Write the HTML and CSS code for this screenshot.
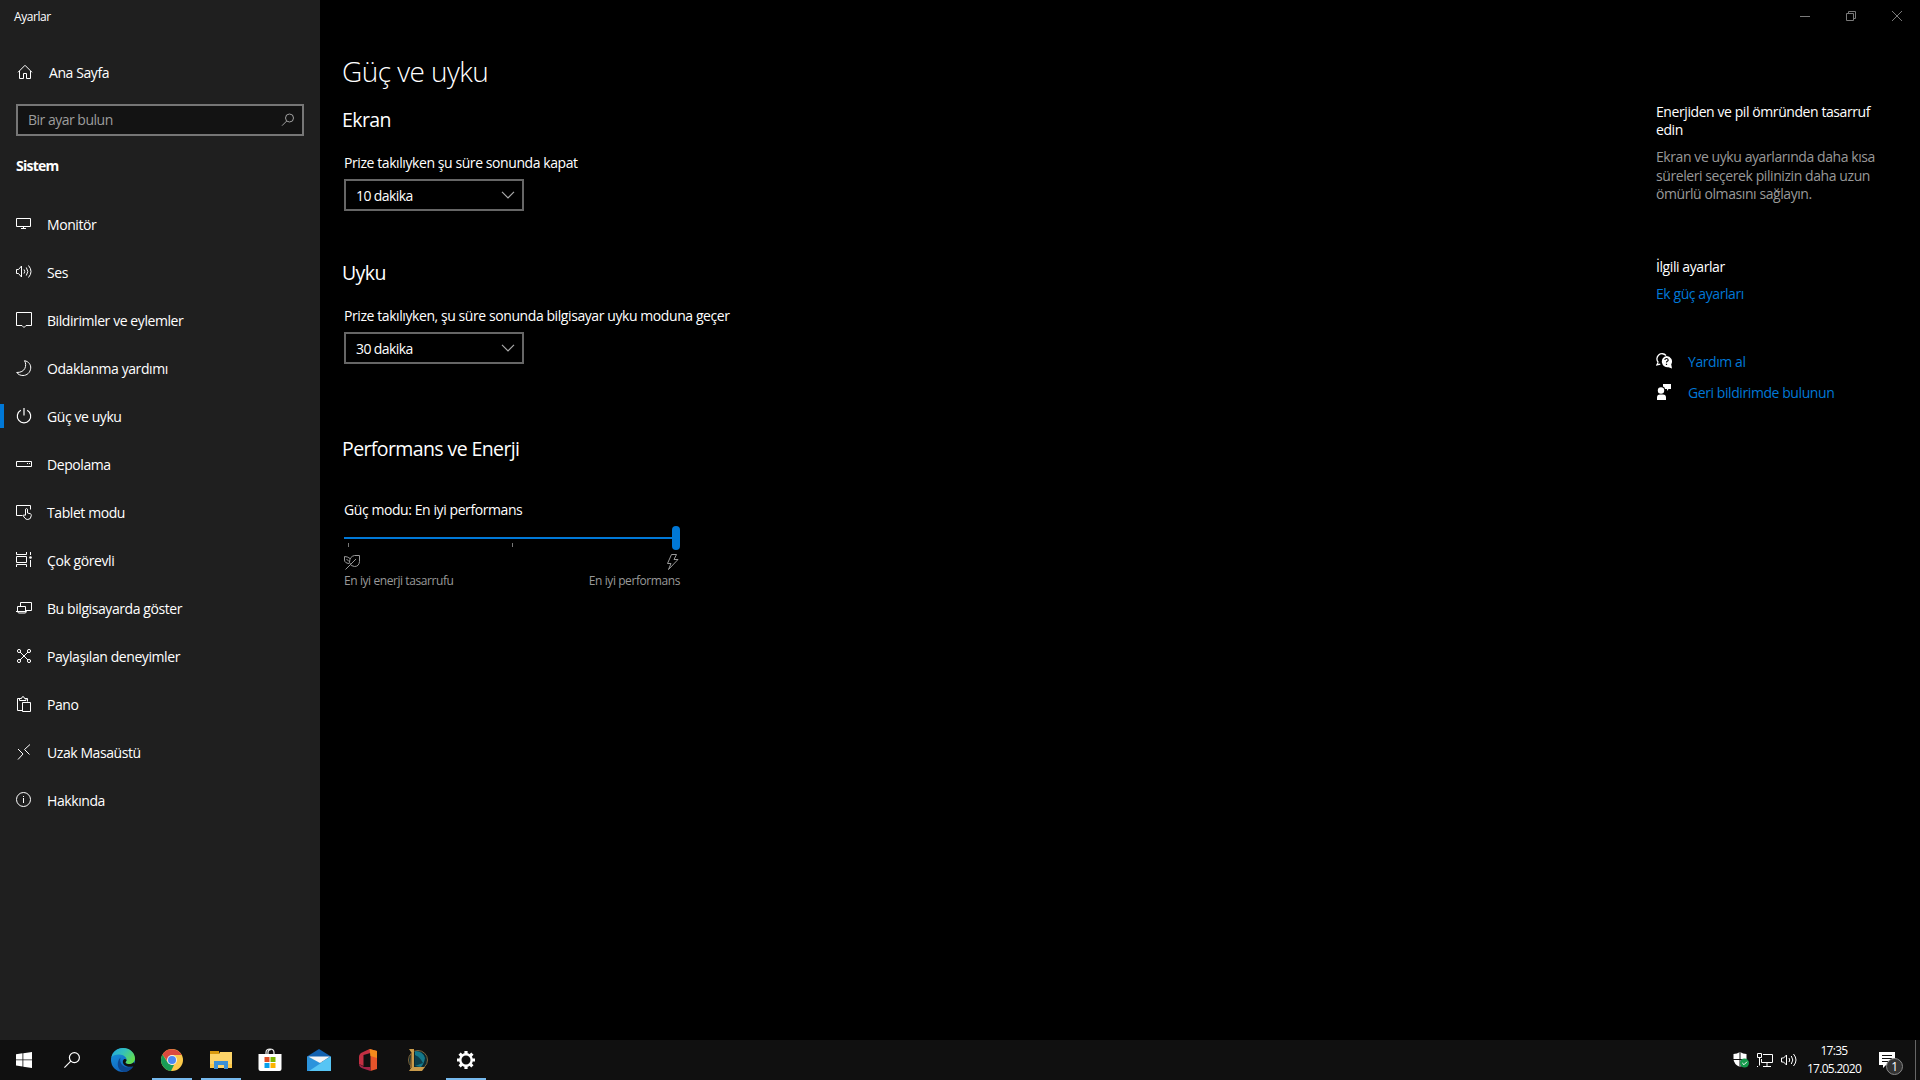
FILE: index.html
```html
<!DOCTYPE html>
<html lang="tr">
<head>
<meta charset="utf-8">
<title>Ayarlar</title>
<link rel="stylesheet" href="styles.css">
</head>
<body>
<div class="desktop">
  <div class="window">
    <aside class="sidebar">
      <div class="app-title"><span>Ayarlar</span></div>
      <a class="home">
        <svg class="icon" viewBox="0 0 16 16"><path d="M1 8.3 8 1.3l7 7M2.5 7v7.5h4V9.500h3v5h4V7"/></svg>
        <span>Ana Sayfa</span>
      </a>
      <div class="search">
        <span>Bir ayar bulun</span>
        <svg class="icon" viewBox="0 0 16 16"><circle cx="9.500" cy="6" r="4"/><path d="M6.700 9 2 13.700"/></svg>
      </div>
      <h2 class="group"><span>Sistem</span></h2>
      <nav class="nav">
        <a class="item"><svg class="icon" viewBox="0 0 16 16"><path d="M.5 2.500h14v8H.5zM7.500 10.500v2M5 12.500h5"/></svg><span>Monitör</span></a>
        <a class="item"><svg class="icon" viewBox="0 0 16 16"><path d="M.5 5.500h2L5.500 2v11L2.500 9.500h-2zM8 5.500q1.500 2 0 4M10.300 3.500q3 4 0 8M12.500 1.500q5 6 0 12"/></svg><span>Ses</span></a>
        <a class="item"><svg class="icon" viewBox="0 0 16 16"><path d="M.5.5h15v13H10l-2 2-2-2H.5z"/></svg><span>Bildirimler ve eylemler</span></a>
        <a class="item"><svg class="icon" viewBox="0 0 16 16"><path d="M8.500.7C13 1.500 15 5 14.700 8.200 14.300 12.500 11 15.500 7 15.500c-2.500 0-4.800-1-6.300-3C5 12.500 7.500 11 8.800 8.500 10 6 10 3 8.500.7z"/></svg><span>Odaklanma yardımı</span></a>
        <a class="item active"><svg class="icon" viewBox="0 0 16 16"><path d="M8 0v7.500M4.800 2.300a6.700 6.700 0 1 0 6.400 0" stroke-width="1.200"/></svg><span>Güç ve uyku</span></a>
        <a class="item"><svg class="icon" viewBox="0 0 16 16"><path d="M.5 5.500h15v5H.5zM11 7.500h1M13 7.500h1"/></svg><span>Depolama</span></a>
        <a class="item"><svg class="icon" viewBox="0 0 16 16"><path d="M6.500 11.500h-6v-10h14v4M9.500 11V5.200q1-1.300 2 0V9l3 .8q1 .4.8 1.700-.3 4-3.500 4-2 0-3-1.500L7 11.500q.8-1.200 2.500 0"/></svg><span>Tablet modu</span></a>
        <a class="item"><svg class="icon" viewBox="0 0 16 16"><path d="M.5 0v2.500h10V0M.5 4.500h10v6H.5zM.5 15v-2.500h10V15M14.500 0v3M14.500 8v7"/><circle cx="14.500" cy="5.500" r="1.300" fill="#fff" stroke="none"/></svg><span>Çok görevli</span></a>
        <a class="item"><svg class="icon" viewBox="0 0 16 16"><path d="M4.500 6V2.500h11v8H10M1.500 11V6.500h8V11M0 11.500h1.500l1 1.500h7l1-1.500H0z"/></svg><span>Bu bilgisayarda göster</span></a>
        <a class="item"><svg class="icon" viewBox="0 0 16 16"><path d="M4 4l8 8M12 4l-8 8"/><g><circle cx="3" cy="3" r="1.600"/><circle cx="13" cy="3" r="1.600"/><circle cx="3" cy="13" r="1.600"/><circle cx="13" cy="13" r="1.600"/></g></svg><span>Paylaşılan deneyimler</span></a>
        <a class="item"><svg class="icon" viewBox="0 0 16 16"><path d="M6 14.500H1.500v-12H4M9 2.500h2.500v3M3.500 4.500V2.500H5.500Q6 .5 7 .5T8.500 2.500h1.500v2zM6.500 6.500h8v9h-8z"/></svg><span>Pano</span></a>
        <a class="item"><svg class="icon" viewBox="0 0 16 16"><path d="M2 5l5 5-5 5.500M14 .5 8.500 5.500l5 5"/></svg><span>Uzak Masaüstü</span></a>
        <a class="item"><svg class="icon" viewBox="0 0 16 16"><circle cx="7.500" cy="7.500" r="7"/><path d="M7.500 6v5M7.500 4v1"/></svg><span>Hakkında</span></a>
      </nav>
    </aside>
    <main class="content">
      <div class="caption">
        <svg class="capicon" viewBox="0 0 10 10"><path d="M0 5.500h10"/></svg>
        <svg class="capicon" viewBox="0 0 10 10"><path d="M.5 2.500h7v7h-7zM2.500 2V.5h7v7H8"/></svg>
        <svg class="capicon" viewBox="0 0 10 10"><path d="M0 0l10 10M10 0 0 10"/></svg>
      </div>
      <div class="columns">
        <section class="settings">
          <h1><span>Güç ve uyku</span></h1>
          <h3><span>Ekran</span></h3>
          <p class="label"><span>Prize takılıyken şu süre sonunda kapat</span></p>
          <div class="combo"><span>10 dakika</span><svg class="chev" viewBox="0 0 14 8"><path d="M1 .8l6 6 6-6"/></svg></div>
          <h3 class="sleep"><span>Uyku</span></h3>
          <p class="label"><span>Prize takılıyken, şu süre sonunda bilgisayar uyku moduna geçer</span></p>
          <div class="combo"><span>30 dakika</span><svg class="chev" viewBox="0 0 14 8"><path d="M1 .8l6 6 6-6"/></svg></div>
          <h3 class="perf"><span>Performans ve Enerji</span></h3>
          <p class="label mode"><span>Güç modu: En iyi performans</span></p>
          <div class="slider"><i class="track"></i><i class="thumb"></i></div>
          <div class="ticks"><i></i><i></i></div>
          <div class="ends">
            <svg class="endicon" viewBox="0 0 16 16"><path d="M15.500 1.500v6q-.5 5-5 5-4 0-5-4 0-6 5-7zM12 5 1.500 15.500M5 9.500Q.5 9 .5 6V2.500Q3.500 2.500 6 4.500M2.500 5l2.500 2.500"/></svg>
            <svg class="endicon bolt" viewBox="0 0 16 16"><path d="M8.500.5h5L11 5.500h4L5.500 15.500 8 9.500H4.500z"/></svg>
          </div>
          <div class="ends small"><span>En iyi enerji tasarrufu</span><span>En iyi performans</span></div>
        </section>
        <aside class="related">
          <h4><span>Enerjiden ve pil ömründen tasarruf<br>edin</span></h4>
          <p class="hint"><span>Ekran ve uyku ayarlarında daha kısa<br>süreleri seçerek pilinizin daha uzun<br>ömürlü olmasını sağlayın.</span></p>
          <h4 class="more"><span>İlgili ayarlar</span></h4>
          <a class="link"><span>Ek güç ayarları</span></a>
          <div class="help">
            <svg class="icon" viewBox="0 0 16 16"><path d="M2.200 9.300A5 5 0 1 1 10 2.500M2.200 9.300.8 12l3.500-.8" stroke-width="1.300"/><path d="M10.500 3a5.500 5.500 0 0 1 4.700 8.300L16 15.500l-3.500-1.300A5.500 5.500 0 1 1 10.500 3z" fill="#fff" stroke="none"/><path d="M8.800 7q.2-1.500 1.700-1.500T12.200 7q0 .8-.9 1.300t-.8 1.200M10.500 10.800V12" stroke="#000" stroke-width="1.200"/></svg>
            <a class="link"><span>Yardım al</span></a>
          </div>
          <div class="help">
            <svg class="icon" viewBox="0 0 16 16"><g fill="#fff" stroke="none"><circle cx="5" cy="6.500" r="3.200"/><path d="M1 16v-2.500Q1 10.500 4 10.500h3q3 0 3 3V16zM7 0h8v5h-2.500L11 7V5H9Q9 3 7 2.500z"/></g></svg>
            <a class="link"><span>Geri bildirimde bulunun</span></a>
          </div>
        </aside>
      </div>
    </main>
  </div>
  <footer class="taskbar">
    <div class="apps">
      <a class="app system"><svg width="16" height="16" viewBox="0 0 16 16"><path fill="#fff" d="M0 2.200 6.500 1.300v6.200H0zM7.300 1.200 16 0v7.500H7.300zM0 8.300h6.500v6.200L0 13.600zM7.300 8.300H16V16l-8.700-1.200z"/></svg></a>
      <a class="app system"><svg width="16" height="16" viewBox="0 0 16 16" fill="none" stroke="#fff" stroke-width="1.200"><circle cx="10.400" cy="5.600" r="5"/><path d="M6.800 9.200.4 15.600"/></svg></a>
      <a class="app pinned"><svg width="24" height="24" viewBox="0 0 24 24">
        <defs><linearGradient id="eg1" x1="0" y1="0" x2="1" y2=".6"><stop offset="0" stop-color="#1fa5e5"/><stop offset=".5" stop-color="#35c1b8"/><stop offset="1" stop-color="#62dd4e"/></linearGradient><linearGradient id="eg2" x1="0" y1="0" x2=".6" y2="1"><stop offset="0" stop-color="#1795dc"/><stop offset="1" stop-color="#1062bd"/></linearGradient></defs>
        <circle cx="12" cy="12" r="12" fill="url(#eg2)"/>
        <path fill="url(#eg1)" d="M.4 9.500C1.500 4 6 0 12 0c7 0 12 5 12 10.500 0 3.500-2.500 5.500-5.500 5.500-2.500 0-4.200-.8-4-1.600 0-.5 1-1 1-2.700C15.500 9 12.500 7 8.500 6.600 5 6.300 1.500 7.500.4 9.500z"/>
        <path fill="#0d478f" d="M9.500 9.500c-1.500 5 2 9 6 9.700 2.800.5 5-.5 6.700-1.200Q18.500 24 12.500 24 7 22 6.800 17T9.500 9.500z"/>
        <path fill="#101010" d="M24 16.500l-1.300 2c-.8-.5-3.500 1-7.200-.3-4-1.500-4.500-5.500-2.500-7 1.200-.8 3 0 2.500 1.500-.8 1.300-1.200 1.600-.8 2.300 1 1.200 5.300 1.800 8.300-.8z"/></svg></a>
      <a class="app open"><svg width="22" height="22" viewBox="0 0 22 22"><circle cx="11" cy="11" r="11" fill="#fbc94a"/><path fill="#db4a3f" d="M1.500 5.500A11 11 0 0 1 20.600 6H11L7 13z"/><path fill="#189c56" d="M1.500 5.500 6.700 13.500 11 16l2 0-3 6A11 11 0 0 1 1.500 5.500z"/><circle cx="11" cy="11" r="5" fill="#f1f1f1"/><circle cx="11" cy="11" r="4" fill="#4b88f1"/></svg></a>
      <a class="app open"><svg width="22" height="18" viewBox="0 0 22 18"><path fill="#d99a0f" d="M0 0h9v3H0z"/><path fill="#fdd468" d="M0 3h9l1-2h12v16H0z"/><path fill="#3c91d6" d="M4 10h14v8h-4v-4H8v4H4z"/><path fill="#fbc747" d="M0 13h4v4H0zM18 13h4v4h-4z"/></svg></a>
      <a class="app"><svg width="24" height="24" viewBox="0 0 24 24"><path d="M8 6V4.500q0-3.500 4-3.500t4 3.500V6M10 6V4q0-2 3-2.500" fill="none" stroke="#eee" stroke-width="1.200"/><path fill="#fff" d="M.5 6h23v15q0 2-2 2h-19q-2 0-2-2z"/><path fill="#e04e25" d="M6.500 9h5v5h-5z"/><path fill="#7db700" d="M12.500 9h5v5h-5z"/><path fill="#07a0ec" d="M6.500 15h5v5h-5z"/><path fill="#fcb400" d="M12.500 15h5v5h-5z"/></svg></a>
      <a class="app"><svg width="24" height="22" viewBox="0 0 24 22"><path fill="#1161b0" d="M0 7.500 12 0l12 7.500V12H0z"/><path fill="#30a8e8" d="M0 7.500 14 14l10-6.500V22H0z"/><path fill="#57c5f4" d="M24 7.500 0 21.500V22h24z"/><path fill="#2b93dc" d="M0 7.500 14 14 2 22H0z"/><path fill="#f3f5f7" d="M1 7.500h22L13 14z"/></svg></a>
      <a class="app"><svg width="20" height="24" viewBox="0 0 20 24"><path fill="#c22f42" d="M11.500 1 4 4.500Q1 6 1 9v7l4.500 2V7l7-2z"/><path fill="#e6542a" d="M11.500 1 19 3v18l-6.500 2V5z"/><path fill="#f28a1c" d="M11.500 1 19 3v7l-6.500-2z"/><path fill="#a22347" d="M1 16l5 3h6.500v4L5 20.500Q1 19 1 16z"/></svg></a>
      <a class="app"><svg width="22" height="24" viewBox="0 0 22 24"><circle cx="12" cy="12" r="9.500" fill="#0a2930" stroke="#80653a"/><path fill="#14788a" d="M9 3q8 0 10 7-1 6-4 9L9 18z"/><path fill="#0b3d4a" d="M9 7q5 2 8 8l-8 3z"/><path fill="#c99b4b" d="M3 1h5v18h11l-3 4H3l2-3V4z"/><path fill="#8a642c" d="M5 4h1v16H4z"/></svg></a>
      <a class="app open"><svg width="20" height="20" viewBox="0 0 20 20"><g fill="none" stroke="#fff"><circle cx="10" cy="10" r="5.700" stroke-width="2.400"/><path stroke-width="3.200" d="M10 1v3M10 16v3M1 10h3M16 10h3M3.600 3.600l2.200 2.200M14.200 14.200l2.200 2.200M16.400 3.600l-2.200 2.200M5.800 14.200l-2.200 2.200"/></g></svg></a>
    </div>
    <div class="tray">
      <svg width="16" height="16" viewBox="0 0 16 16"><path fill="#fff" d="M7 0Q10 2 13.500 2v5q0 5-6.500 8Q.5 12 .5 7V2Q4 2 7 0z"/><path stroke="#101010" d="M7 0v15M0 7.500h14"/><circle cx="11.500" cy="11" r="4.500" fill="#159a4c"/><path d="M9.300 11l1.700 1.700 3-3" fill="none" stroke="#fff"/></svg>
      <svg width="16" height="14" viewBox="0 0 16 14"><path fill="none" stroke="#fff" d="M6 1.500h9.500v8h-11V6M.5.5h4v4h-4zM2.500 4.500v8M0 13.500h1M10 9.500v4M6 13.500h8"/></svg>
      <svg width="16" height="14" viewBox="0 0 16 14"><path fill="none" stroke="#fff" d="M.5 5h2L5.500 2v10L2.500 9h-2zM8 5q1.500 2 0 4M10.300 3q3 4 0 8M12.500 1q5 6 0 12"/></svg>
      <div class="clock"><span>17:35</span><span>17.05.2020</span></div>
      <div class="action">
        <svg width="17" height="16" viewBox="0 0 17 16"><path fill="#fff" d="M0 0h16v13H7l-3 3v-3H0z"/><path stroke="#101010" d="M3 3.500h10M3 6.500h10M3 9.500h6"/></svg>
        <b class="badge">1</b>
      </div>
    </div>
  </footer>
</div>
</body>
</html>
```
FILE: styles.css
```css
* { box-sizing: border-box; }
html, body { margin: 0; height: 100%; background: #000; }
body { font: 14px/20px "Open Sans", "Noto Sans", sans-serif; color: #fff; overflow: hidden; letter-spacing: -0.42px; }
h1, h2, h3, h4, p { margin: 0; font-weight: 400; }
svg { display: block; flex: none; }
.desktop { display: flex; flex-direction: column; width: 1920px; height: 1080px; }
.window { display: flex; height: 1040px; }

.sidebar { width: 320px; background: #1f1f1f; }
.app-title { height: 32px; padding: 1px 0 0 14px; font-size: 12px; line-height: 32px; }
.icon { width: 16px; height: 16px; fill: none; stroke: #fff; stroke-width: 1; }
.home { display: flex; align-items: center; gap: 16px; height: 48px; margin-top: 17px; padding: 0 17px; }
.home .icon { margin-top: -2px; }
.search { display: flex; align-items: center; justify-content: space-between; height: 32px; margin: 7px 16px 0; padding: 0 6px 0 10px; border: 2px solid #767676; background: #131313; color: #9d9d9d; letter-spacing: -0.5px; }
.search span { padding-bottom: 1px; }
.search .icon { stroke: #a0a0a0; }
.group { margin-top: 20px; padding-left: 16px; font-size: 14px; font-weight: 700; letter-spacing: -0.75px; }
.nav { margin-top: 24px; }
.item { display: flex; align-items: center; gap: 15px; height: 48px; padding-left: 16px; }
.item span { padding-top: 2px; }
.active { padding-left: 12px; }
.active::before { content: ""; width: 4px; height: 24px; margin: 0 -3px 0 -12px; background: #0078d7; }
.active .icon { margin-left: -4px; margin-right: 0; }
.active::before { margin-right: -3px; }
.active .icon { margin-left: 0; }

.content { flex: 1; }
.caption { display: flex; justify-content: flex-end; gap: 36px; height: 32px; padding: 11px 18px 0; }
.capicon { width: 10px; height: 10px; fill: none; stroke: #7a7a7a; }
.columns { display: flex; justify-content: space-between; padding: 19px 32px 0 22px; }
.settings { width: 420px; }
h1 { font-size: 28px; line-height: 40px; font-weight: 300; letter-spacing: -0.55px; }
h3 { margin-top: 15px; font-size: 19.5px; line-height: 28px; letter-spacing: -0.6px; }
.label { margin-top: 19px; padding-left: 2px; }
.combo { display: flex; align-items: center; justify-content: space-between; width: 180px; height: 32px; margin: 6px 0 0 2px; padding: 0 7px 0 10px; border: 2px solid #666; letter-spacing: -0.6px; }
.combo span { padding-top: 1px; }
.chev { width: 14px; height: 8px; fill: none; stroke: #aaa; stroke-width: 1.2; }
.sleep { margin-top: 48px; }
.perf { margin-top: 71px; }
.mode { margin-top: 37px; }
.slider { display: flex; align-items: center; width: 336px; height: 24px; margin: 6px 0 0 2px; }
.track { flex: 1; height: 2px; background: #0078d7; }
.thumb { width: 8px; height: 24px; border-radius: 4px; background: #0078d7; }
.ticks { display: flex; gap: 163px; margin: -7px 0 0 6px; }
.ticks i { width: 1px; height: 4px; background: #777; }
.ends { display: flex; justify-content: space-between; width: 336px; margin: 7px 0 0 2px; color: #999; font-size: 12px; }
.small { margin-top: 1px; }
.endicon { width: 16px; height: 16px; fill: none; stroke: #999; }
.bolt { margin-right: 1px; }
.related { width: 232px; padding-top: 52px; }
h4 { font-size: 14px; line-height: 18px; }
.hint { margin-top: 9px; line-height: 18.6px; color: #999; }
.more { margin-top: 54px; }
.link { display: block; margin-top: 8px; color: #0078d7; }
.help { display: flex; gap: 16px; align-items: center; height: 31px; }
.help .link { margin: 0; padding-top: 1px; }
.related > .link { margin-bottom: 42px; }

.taskbar { display: flex; justify-content: space-between; height: 40px; background: #101010; }
.apps { display: flex; }
.app { display: flex; align-items: center; justify-content: center; width: 49px; height: 40px; }
.system { width: 48px; }
.pinned { margin-left: 2.5px; }
.open { background: linear-gradient(#76b9ed, #76b9ed) center bottom / 40px 2px no-repeat; }
.tray { display: flex; align-items: center; gap: 8px; padding-right: 4px; }
.clock { display: flex; flex-direction: column; align-items: center; width: 56px; margin: 0 9px 0 1px; font-size: 12px; line-height: 18px; letter-spacing: -0.7px; }
.action { position: relative; width: 37px; height: 40px; padding-top: 12px; border-right: 1px solid #666; }
.badge { position: absolute; left: 7px; top: 18px; width: 17px; height: 17px; border-radius: 50%; border: 1px solid #888; background: #333; font: 12px/15px "Open Sans", sans-serif; text-align: center; }
```
